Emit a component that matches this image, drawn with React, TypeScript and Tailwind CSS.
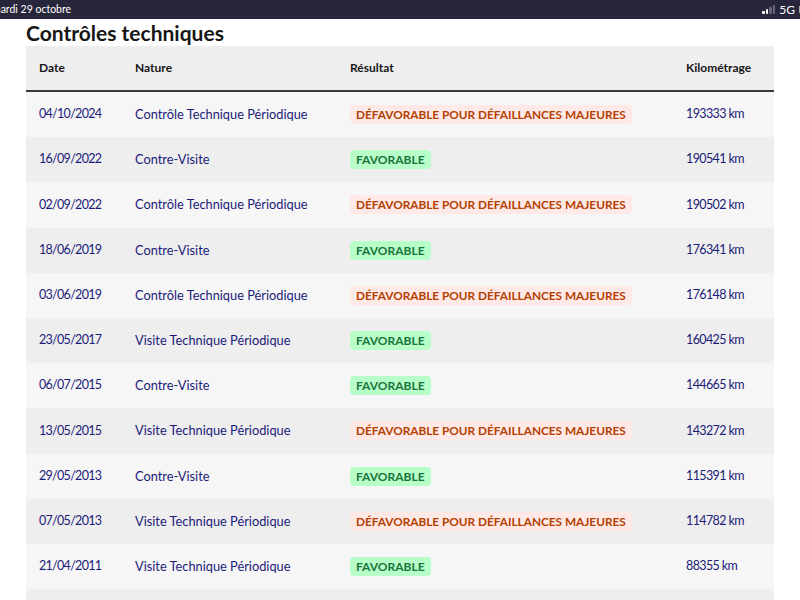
import React from "react";

type Row = {
  date: string;
  nature: string;
  ok: boolean;
  km: string;
};

const rows: Row[] = [
  { date: "04/10/2024", nature: "Contrôle Technique Périodique", ok: false, km: "193333 km" },
  { date: "16/09/2022", nature: "Contre-Visite", ok: true, km: "190541 km" },
  { date: "02/09/2022", nature: "Contrôle Technique Périodique", ok: false, km: "190502 km" },
  { date: "18/06/2019", nature: "Contre-Visite", ok: true, km: "176341 km" },
  { date: "03/06/2019", nature: "Contrôle Technique Périodique", ok: false, km: "176148 km" },
  { date: "23/05/2017", nature: "Visite Technique Périodique", ok: true, km: "160425 km" },
  { date: "06/07/2015", nature: "Contre-Visite", ok: true, km: "144665 km" },
  { date: "13/05/2015", nature: "Visite Technique Périodique", ok: false, km: "143272 km" },
  { date: "29/05/2013", nature: "Contre-Visite", ok: true, km: "115391 km" },
  { date: "07/05/2013", nature: "Visite Technique Périodique", ok: false, km: "114782 km" },
  { date: "21/04/2011", nature: "Visite Technique Périodique", ok: true, km: "88355 km" },
  { date: "", nature: "", ok: true, km: "" },
];

const StatusBar: React.FC = () => (
  <div className="flex h-[19px] items-center justify-between bg-[#28263a] text-[10.5px] text-white">
    <span className="-ml-[8px]">mardi 29 octobre</span>
    <div className="flex items-center gap-[4px] -mr-[9px]">
      <div className="flex items-end gap-[1px]">
        <span className="h-[3px] w-[2.5px] rounded-[1px] bg-white" />
        <span className="h-[5px] w-[2.5px] rounded-[1px] bg-white" />
        <span className="h-[7px] w-[2.5px] rounded-[1px] bg-white/30" />
        <span className="h-[9px] w-[2.5px] rounded-[1px] bg-white/30" />
      </div>
      <span className="text-[12px]">5G</span>
      <span className="h-[9px] w-[10px] rounded-[2px] border border-white/60" />
    </div>
  </div>
);

const Badge: React.FC<{ ok: boolean }> = ({ ok }) =>
  ok ? (
    <span className="rounded-[4px] bg-[#b8fec9] px-[6px] py-[2px] text-[12px] font-bold uppercase leading-[16px] text-[#18753c]">
      Favorable
    </span>
  ) : (
    <span className="rounded-[4px] bg-[#ffe9e6] px-[6px] py-[2px] text-[11.8px] font-bold uppercase leading-[16px] text-[#b34000]">
      Défavorable pour défaillances majeures
    </span>
  );

const TableRow: React.FC<{ row: Row; index: number }> = ({ row, index }) => (
  <div
    className={`flex h-[45.2px] items-center text-[12.8px] text-[#1b1b78] ${
      index % 2 === 0 ? "bg-[#f6f6f6]" : "bg-[#eeeeee]"
    }`}
  >
    <div className="w-[109px] pl-[13px] text-[12.5px] tracking-[-0.7px]">{row.date}</div>
    <div className="w-[215px]">{row.nature}</div>
    <div className="w-[336px]">{row.date && <Badge ok={row.ok} />}</div>
    <div className="w-[88px] text-[12.5px] tracking-[-0.6px]">{row.km}</div>
  </div>
);

export default function App() {
  return (
    <div className="h-[600px] w-[800px] overflow-hidden bg-white font-['Lato',sans-serif]">
      <StatusBar />
      <div className="px-[26px]">
        <h1 className="h-[27px] text-[21px] font-bold leading-[27px] text-[#161616]">
          Contrôles techniques
        </h1>
        <div className="w-[748px]">
          <div className="flex h-[46px] items-center border-b-2 border-[#3a3a3a] bg-[#eeeeee] text-[12px] font-bold text-[#161616]">
            <div className="w-[109px] pl-[13px]">Date</div>
            <div className="w-[215px]">Nature</div>
            <div className="w-[336px]">Résultat</div>
            <div className="w-[88px]">Kilométrage</div>
          </div>
          {rows.map((row, i) => (
            <TableRow key={i} row={row} index={i} />
          ))}
        </div>
      </div>
    </div>
  );
}
